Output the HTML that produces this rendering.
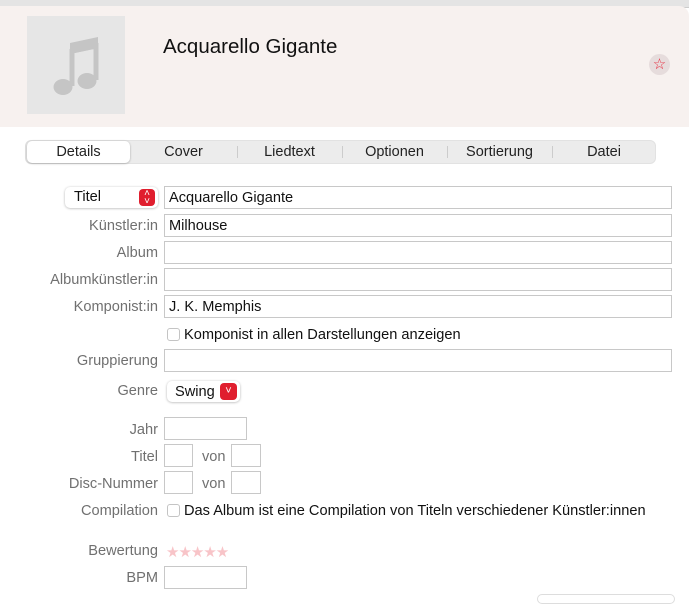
<!DOCTYPE html>
<html><head><meta charset="utf-8"><style>
*{box-sizing:border-box;margin:0;padding:0}
body{width:689px;height:599px;overflow:hidden;background:#fff;font-family:"Liberation Sans",sans-serif;position:relative;color:#1d1d1d}
.abs{position:absolute}
.hdr{left:0;top:6px;width:689px;height:121px;background:#f7f1ef;border-top-right-radius:10px}
.tabbar{left:0;top:0;width:689px;height:8px;background:#e4e4e4;border-bottom:1px solid #ccc}
.art{left:27px;top:16px;width:98px;height:98px;background:#e6e6e6}
.title{left:163px;top:35px;font-size:20.5px;color:#111}
.starbtn{left:649px;top:54px;width:21px;height:21px;border-radius:50%;background:#e6dcdc;color:#e8283c;font-size:15px;text-align:center;line-height:21px}
.tabs{left:25px;top:140px;width:631px;height:24px;background:#ececec;border-radius:6px;border:1px solid #e2e2e2}
.tab{position:absolute;top:0;height:22px;line-height:23px;font-size:14.5px;text-align:center;color:#222}
.sel{background:#fff;border-radius:5px;box-shadow:0 0.5px 2px rgba(0,0,0,.3)}
.sep{position:absolute;top:5px;width:1px;height:12px;background:#ccc}
.lbl{position:absolute;right:531px;font-size:14.6px;color:#707070;text-align:right;white-space:nowrap}
.fld{position:absolute;left:164px;height:23px;border:1px solid #c8c8c8;font-size:14.6px;line-height:23px;padding-left:4px;color:#111}
.txt{position:absolute;font-size:14.6px;color:#111;white-space:nowrap}
.cb{position:absolute;width:13px;height:13px;border:1px solid #c4c4c4;border-radius:3px;background:#fff}
.pop{position:absolute;border-radius:5px;background:#fff;box-shadow:0 0.5px 2.5px rgba(0,0,0,.3);font-size:14.6px;color:#111}
.red{position:absolute;background:#e01e2e;border-radius:4px;color:#fff;text-align:center}
</style></head><body>
<div class="abs tabbar"></div>
<div class="abs hdr"></div>
<div class="abs art">
<svg width="98" height="98" viewBox="0 0 98 98"><path d="M45 70 V35 L69 30 V64" stroke="#c5c5c5" stroke-width="5" fill="none"/><path d="M43 27 L71 21 V32 L43 38Z" fill="#c5c5c5"/><ellipse cx="36" cy="71" rx="9.5" ry="8" fill="#c5c5c5"/><ellipse cx="60" cy="65" rx="9.5" ry="8" fill="#c5c5c5"/></svg>
</div>
<div class="abs title">Acquarello Gigante</div>
<div class="abs starbtn">☆</div>
<div class="abs tabs">
<div class="tab sel" style="left:1px;width:103px">Details</div>
<div class="tab" style="left:104px;width:107px">Cover</div>
<div class="sep" style="left:211px"></div>
<div class="tab" style="left:211px;width:105px">Liedtext</div>
<div class="sep" style="left:316px"></div>
<div class="tab" style="left:316px;width:105px">Optionen</div>
<div class="sep" style="left:421px"></div>
<div class="tab" style="left:421px;width:105px">Sortierung</div>
<div class="sep" style="left:526px"></div>
<div class="tab" style="left:526px;width:104px">Datei</div>
</div>

<div class="pop" style="left:65px;top:187px;width:93px;height:21px;line-height:21px;padding-left:9px">Titel<div class="red" style="left:74px;top:2px;width:16px;height:17px;font-size:10px;line-height:8px;padding-top:1px">˄<br>˅</div></div>
<div class="fld" style="top:186px;width:508px">Acquarello Gigante</div>
<div class="lbl" style="top:218px">Künstler:in</div><div class="fld" style="top:214px;width:508px">Milhouse</div>
<div class="lbl" style="top:245px">Album</div><div class="fld" style="top:241px;width:508px"></div>
<div class="lbl" style="top:272px">Albumkünstler:in</div><div class="fld" style="top:268px;width:508px"></div>
<div class="lbl" style="top:299px">Komponist:in</div><div class="fld" style="top:295px;width:508px">J. K. Memphis</div>
<div class="cb" style="left:167px;top:328px"></div><div class="txt" style="left:184px;top:327px">Komponist in allen Darstellungen anzeigen</div>
<div class="lbl" style="top:353px">Gruppierung</div><div class="fld" style="top:349px;width:508px"></div>
<div class="lbl" style="top:383px">Genre</div>
<div class="pop" style="left:167px;top:381px;width:73px;height:21px;line-height:22px;padding-left:8px">Swing<div class="red" style="left:53px;top:2px;width:17px;height:17px;font-size:11px;line-height:17px">˅</div></div>
<div class="lbl" style="top:422px">Jahr</div><div class="fld" style="top:417px;width:83px"></div>
<div class="lbl" style="top:449px">Titel</div><div class="fld" style="top:444px;width:29px"></div>
<div class="txt" style="left:202px;top:449px;color:#707070">von</div><div class="fld" style="left:231px;top:444px;width:30px"></div>
<div class="lbl" style="top:476px">Disc-Nummer</div><div class="fld" style="top:471px;width:29px"></div>
<div class="txt" style="left:202px;top:476px;color:#707070">von</div><div class="fld" style="left:231px;top:471px;width:30px"></div>
<div class="lbl" style="top:503px">Compilation</div>
<div class="cb" style="left:167px;top:504px"></div><div class="txt" style="left:184px;top:503px">Das Album ist eine Compilation von Titeln verschiedener Künstler:innen</div>
<div class="lbl" style="top:543px">Bewertung</div>
<div class="txt" style="left:166px;top:543px;color:#f8c4c8;font-size:15px;letter-spacing:-1px">★★★★★</div>
<div class="lbl" style="top:570px">BPM</div><div class="fld" style="top:566px;width:83px"></div>
<div class="abs" style="left:537px;top:594px;width:138px;height:10px;border:1px solid #ddd;border-radius:5px"></div>
</body></html>
